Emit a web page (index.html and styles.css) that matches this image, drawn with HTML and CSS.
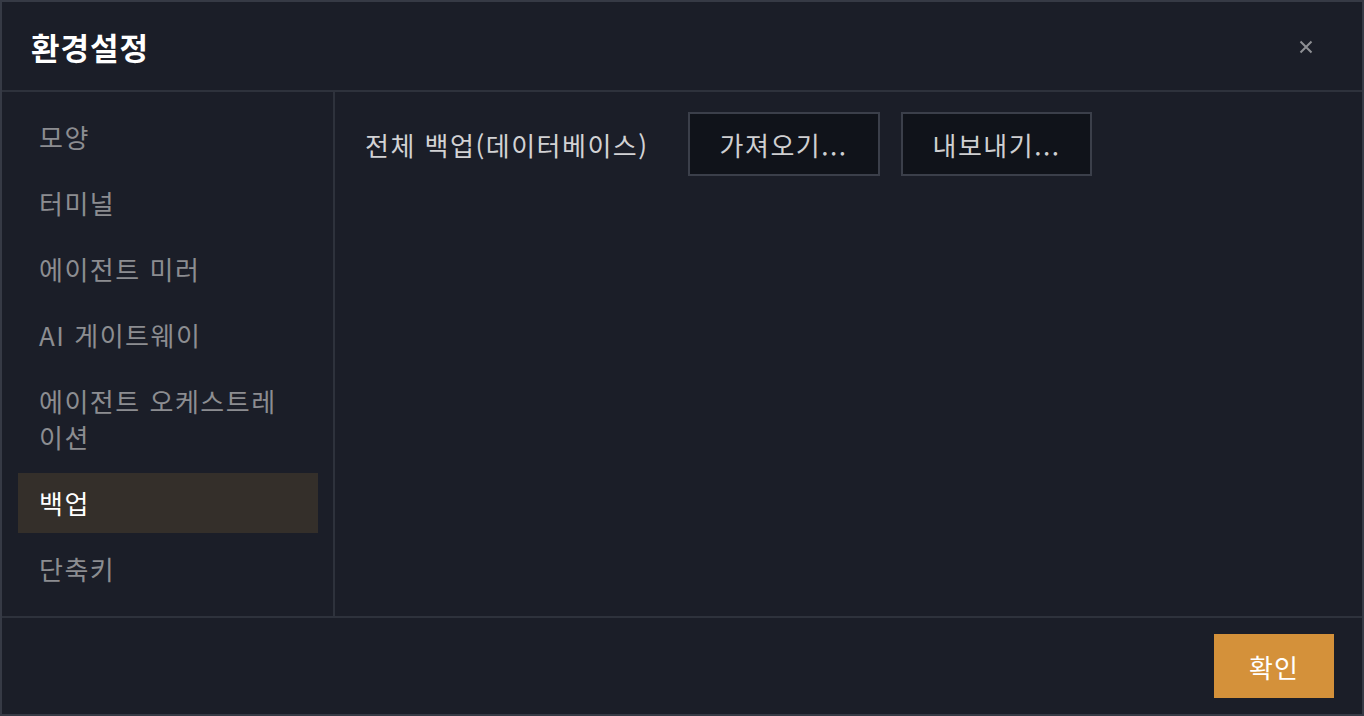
FILE: index.html
```html
<!DOCTYPE html>
<html lang="ko">
<head>
<meta charset="utf-8">
<title>환경설정</title>
<link rel="stylesheet" href="styles.css">
</head>
<body>
<div class="dialog">
  <header class="header">
    <h1 class="title">환경설정</h1>
    <button class="close" aria-label="닫기">
      <svg width="14" height="14" viewBox="0 0 14 14"><path d="M1.5 1.5 L12.5 12.5 M12.5 1.5 L1.5 12.5" stroke="#8e8f94" stroke-width="2" fill="none"/></svg>
    </button>
  </header>
  <div class="body">
    <nav class="sidebar">
      <div class="item">모양</div>
      <div class="item">터미널</div>
      <div class="item">에이전트 미러</div>
      <div class="item">AI 게이트웨이</div>
      <div class="item">에이전트 오케스트레이션</div>
      <div class="item active">백업</div>
      <div class="item">단축키</div>
    </nav>
    <main class="main">
      <div class="row">
        <span class="label">전체 백업(데이터베이스)</span>
        <div class="buttons">
          <button class="btn">가져오기...</button>
          <button class="btn">내보내기...</button>
        </div>
      </div>
    </main>
  </div>
  <footer class="footer">
    <button class="ok">확인</button>
  </footer>
</div>
</body>
</html>
```

FILE: styles.css
```css
* { box-sizing: border-box; }
html, body { margin: 0; padding: 0; height: 100%; }
body {
  background: #1b1e28;
  font-family: "Noto Sans CJK KR", "Noto Sans", sans-serif;
  color: #d0d0d0;
}
.dialog {
  height: 100vh;
  border: 2px solid #363a45;
  display: flex;
  flex-direction: column;
  background: #1b1e28;
}
.header {
  height: 90px;
  flex: none;
  border-bottom: 2px solid #2e323c;
  display: flex;
  align-items: center;
  justify-content: space-between;
  padding: 0 49px 0 29px;
}
.title {
  margin: 0;
  font-size: 31px;
  font-weight: 700;
  letter-spacing: 1px;
  color: #ffffff;
  line-height: 1;
}
.close {
  background: none;
  border: none;
  padding: 0;
  width: 14px;
  height: 14px;
  display: flex;
  margin-top: 2px;
}
.body {
  flex: 1;
  display: flex;
  min-height: 0;
}
.sidebar {
  width: 333px;
  flex: none;
  border-right: 2px solid #2e323c;
  padding: 15px 15px 0 16px;
  display: flex;
  flex-direction: column;
  gap: 6px;
}
.item {
  padding: 12px 24px 12px 21px;
  font-size: 26px;
  letter-spacing: 1.5px;
  line-height: 36px;
  color: #8c8d91;
}
.item.active {
  background: #342f2a;
  color: #ffffff;
}
.main {
  flex: 1;
  padding: 20px 30px;
}
.row {
  display: flex;
  align-items: center;
  gap: 39px;
}
.label {
  font-size: 26px;
  letter-spacing: 1.5px;
  color: #d2d2d4;
}
.buttons {
  display: flex;
  gap: 21px;
}
.btn {
  height: 64px;
  padding: 0 30px;
  background: #10131a;
  border: 2px solid #3b3f4a;
  color: #cfcfd1;
  font-family: inherit;
  font-size: 26px;
  letter-spacing: 1.5px;
}
.footer {
  height: 98px;
  flex: none;
  border-top: 2px solid #2e323c;
  display: flex;
  justify-content: flex-end;
  align-items: center;
  padding: 0 28px;
}
.ok {
  width: 120px;
  height: 64px;
  background: #d4913a;
  border: none;
  color: #ffffff;
  font-family: inherit;
  font-size: 26px;
  letter-spacing: 1px;
}
```
